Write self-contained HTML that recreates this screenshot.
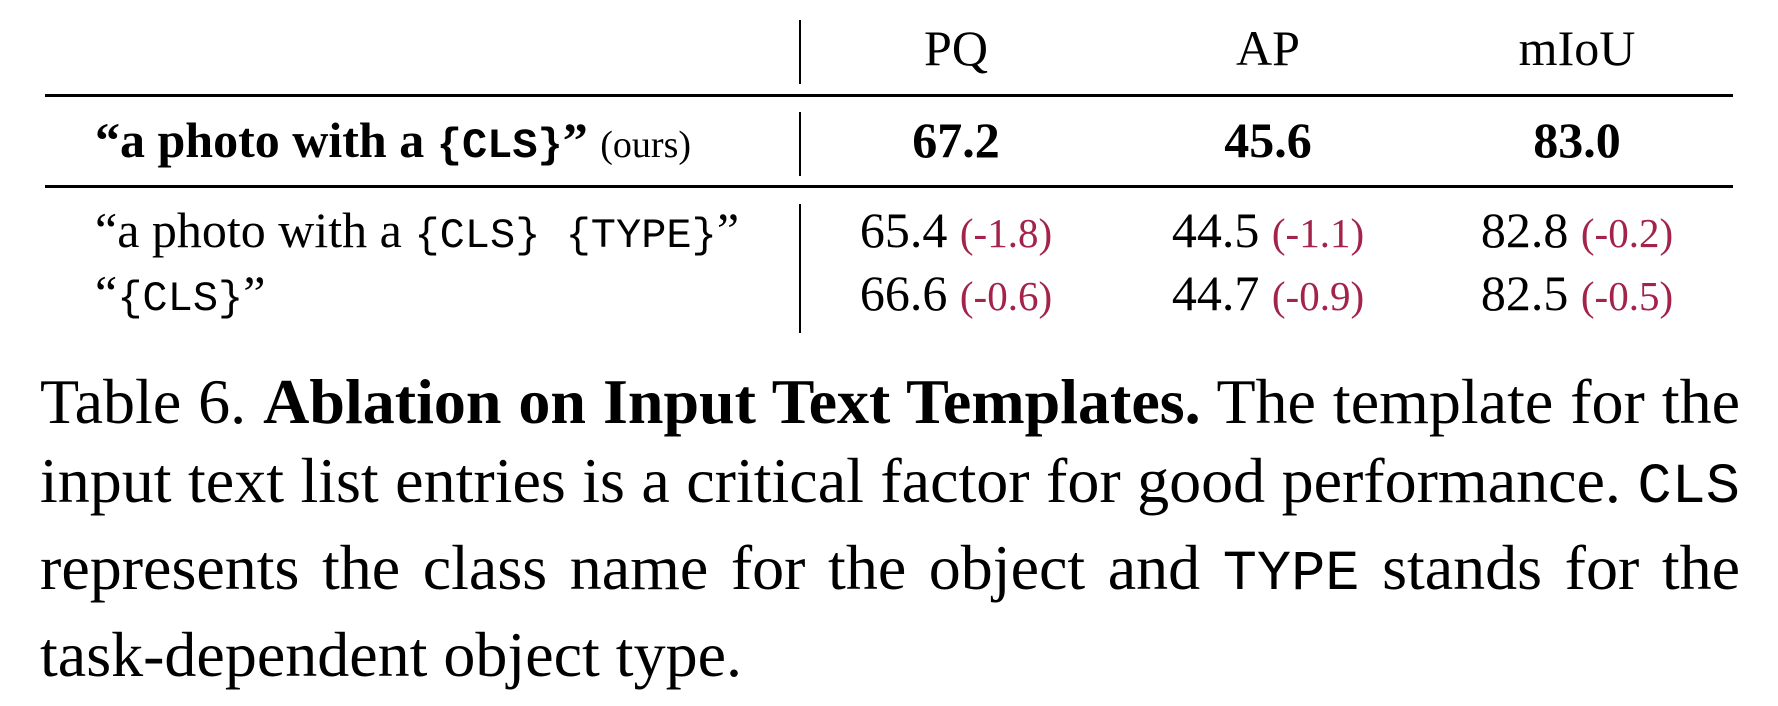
<!DOCTYPE html>
<html><head><meta charset="utf-8"><style>
html,body{margin:0;padding:0;background:#fff;}
body{width:1778px;height:706px;position:relative;overflow:hidden;font-family:"Liberation Serif",serif;color:#000;}
.t{position:absolute;font-size:50px;line-height:50px;white-space:nowrap;}
.c{text-align:center;width:400px;}
.m{font-family:"Liberation Mono",monospace;font-size:42px;letter-spacing:0;}
.s{font-size:38px;}
.r{color:#a3234a;font-size:41px;}
.b{font-weight:bold;}
.rule{position:absolute;left:45px;width:1688px;height:3px;background:#000;}
.vl{position:absolute;left:799px;width:2px;background:#000;}
.cap{position:absolute;left:40px;top:362px;width:1700px;font-size:64px;line-height:79px;text-align:justify;}
.cap .m{font-size:57px;}
</style></head><body>
<div class="vl" style="top:20px;height:64px"></div>
<div class="vl" style="top:112px;height:64px"></div>
<div class="vl" style="top:204px;height:129px"></div>
<div class="rule" style="top:94px"></div>
<div class="rule" style="top:185px"></div>

<div class="t c" style="left:756px;top:23px">PQ</div>
<div class="t c" style="left:1068px;top:23px">AP</div>
<div class="t c" style="left:1377px;top:23px">mIoU</div>

<div class="t b" style="left:95px;top:115px">“a photo with a <span class="m">{CLS}</span>” <span class="s" style="font-weight:normal">(ours)</span></div>
<div class="t c b" style="left:756px;top:115px">67.2</div>
<div class="t c b" style="left:1068px;top:115px">45.6</div>
<div class="t c b" style="left:1377px;top:115px">83.0</div>

<div class="t" style="left:95px;top:205px">“a photo with a <span class="m">{CLS} {TYPE}</span>”</div>
<div class="t c" style="left:756px;top:205px">65.4 <span class="r">(-1.8)</span></div>
<div class="t c" style="left:1068px;top:205px">44.5 <span class="r">(-1.1)</span></div>
<div class="t c" style="left:1377px;top:205px">82.8 <span class="r">(-0.2)</span></div>

<div class="t" style="left:95px;top:268px">“<span class="m">{CLS}</span>”</div>
<div class="t c" style="left:756px;top:268px">66.6 <span class="r">(-0.6)</span></div>
<div class="t c" style="left:1068px;top:268px">44.7 <span class="r">(-0.9)</span></div>
<div class="t c" style="left:1377px;top:268px">82.5 <span class="r">(-0.5)</span></div>

<div class="cap">Table 6. <b>Ablation on Input Text Templates.</b> The template for the input text list entries is a critical factor for good performance. <span class="m">CLS</span> represents the class name for the object and <span class="m">TYPE</span> stands for the task-dependent object type.</div>
</body></html>
